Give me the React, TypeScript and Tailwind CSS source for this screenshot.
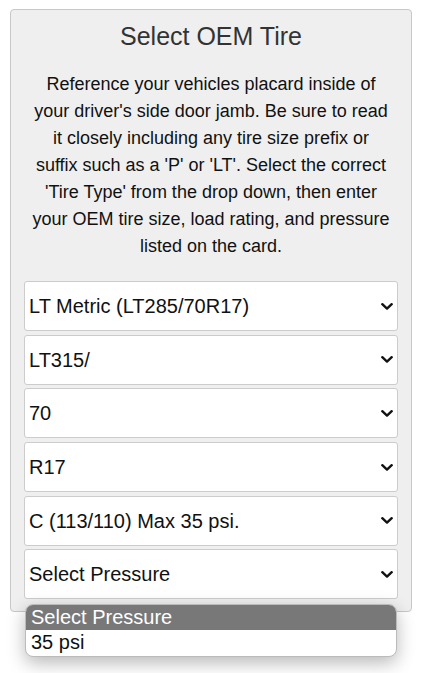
import React from "react";

const Chevron = () => (
  <svg width="12" height="7" viewBox="0 0 12 7" className="shrink-0">
    <path d="M1.3 1.2 L6 5.6 L10.7 1.2" fill="none" stroke="#111" strokeWidth="2.4" strokeLinecap="round" strokeLinejoin="round" />
  </svg>
);

const Sel = ({ label }: { label: string }) => (
  <div className="h-[50px] border border-[#ccc] rounded-[3px] bg-white flex items-center justify-between pl-[4px] pr-[4px] text-[20px] text-[#111]">
    <span className="whitespace-nowrap">{label}</span>
    <Chevron />
  </div>
);

export default function App() {
  const opts = [
    "LT Metric (LT285/70R17)",
    "LT315/",
    "70",
    "R17",
    "C (113/110) Max 35 psi.",
    "Select Pressure",
  ];
  return (
    <div className="relative w-[436px] h-[673px] bg-white font-['Liberation_Sans',Arial,sans-serif]">
      <div className="ml-[10px] pt-[9px] w-[402px]">
        <div className="h-[603px] border border-[#c8c8c8] rounded-[4px] bg-[#efefef] px-[13px] pt-[12.5px]">
          <h2 className="text-[25px] leading-[27px] text-center text-[#333]">Select OEM Tire</h2>
          <p className="mt-[21.75px] -mx-[6px] text-[18px] leading-[27px] text-center text-[#111] whitespace-nowrap">
            Reference your vehicles placard inside of<br />
            your driver's side door jamb. Be sure to read<br />
            it closely including any tire size prefix or<br />
            suffix such as a 'P' or 'LT'. Select the correct<br />
            'Tire Type' from the drop down, then enter<br />
            your OEM tire size, load rating, and pressure<br />
            listed on the card.
          </p>
          <div className="mt-[20.75px] flex flex-col gap-[3.7px]">
            {opts.map((o) => (
              <Sel key={o} label={o} />
            ))}
          </div>
        </div>
      </div>
      <div className="absolute left-[25px] top-[604px] w-[372px] rounded-[8px] border border-[#bbb] bg-white overflow-hidden shadow-[0_6px_18px_rgba(0,0,0,0.28)] text-[20px]">
        <div className="h-[25.3px] bg-[#787878] text-white pl-[5px] leading-[25px] whitespace-nowrap">Select Pressure</div>
        <div className="h-[25.3px] text-[#111] pl-[5px] leading-[25px] whitespace-nowrap">35 psi</div>
      </div>
    </div>
  );
}
